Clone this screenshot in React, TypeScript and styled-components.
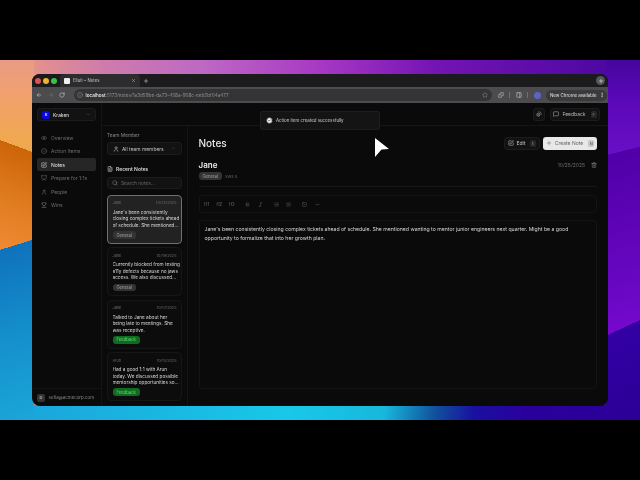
import { type FC, type ReactNode } from 'react'
import styled, { createGlobalStyle } from 'styled-components'
import {
  ArrowLeft,
  ArrowRight,
  Bold,
  CircleCheck,
  ChevronDown,
  EllipsisVertical,
  Eye,
  FileText,
  Info,
  Italic,
  List,
  ListOrdered,
  MessageSquare,
  Minus,
  PanelRight,
  Plus,
  Presentation,
  Puzzle,
  RotateCw,
  Search,
  SquareCheck,
  SquarePen,
  Star,
  SunMoon,
  Trash2,
  Trophy,
  User,
  X,
} from 'lucide-react'

const GlobalStyle = createGlobalStyle`
  html, body {
    margin: 0;
    padding: 0;
    background: #000;
    font-family: Inter, "Liberation Sans", sans-serif;
  }
  * { box-sizing: border-box; }
`

const Stage = styled.div`
  width: 640px;
  height: 480px;
  padding: 60px 0;
  background: #000;
  overflow: hidden;
  filter: blur(0.4px);
`

const Wallpaper = styled.div`
  height: 360px;
  padding: 14px 32px;
  background:
    linear-gradient(163deg, transparent 181.5px, #0f72bc 181.5px, #1590cc 270px, #1ba6d8 354px) left / 34px 100% no-repeat,
    linear-gradient(200.5deg, transparent 86.8px, #cc6408 86.8px, #e07c20 140px, #f08a34 190px) left / 34px 100% no-repeat,
    linear-gradient(180deg, #e89c84 0, #f0a070 30px, #f0a850 80px, #f0a850 100px) left / 34px 100% no-repeat,
    linear-gradient(155deg, transparent 250px, #3400a4 250px, #2a0096 340px) right / 34px 100% no-repeat,
    linear-gradient(166deg, transparent 92.4px, #5000a8 92.4px, #6c08c6 240px, #7408cc 260px) right / 34px 100% no-repeat,
    linear-gradient(180deg, #46069e 0, #5a08b8 40px, #6a10c8 100px) right / 34px 100% no-repeat,
    linear-gradient(98deg, #1ba2da 0, #18c8e8 45%, #17b8dc 60%, #10509c 68%, #1a10a0 74%, #2a009c 82%, #2c0098 100%) bottom / 100% 15px no-repeat,
    linear-gradient(90deg, #eea27c 0, #e2908e 6%, #cf7cac 16%, #bd68c4 32%, #a838c4 50%, #7414b4 68%, #46069e 100%);
`

const BrowserWindow = styled.div`
  position: relative;
  height: 332px;
  display: flex;
  flex-direction: column;
  border-radius: 8px;
  overflow: hidden;
  background: #0a0a0a;
  color: #e8e8e8;
`

const TabStrip = styled.div`
  height: 13px;
  display: flex;
  align-items: center;
  background: #1b1b1d;
  padding: 0 3px 0 3px;
`

const Light = styled.span<{ $color: string }>`
  width: 6px;
  height: 6px;
  border-radius: 50%;
  margin-right: 2px;
  background: ${(p) => p.$color};
`

const Tab = styled.div`
  width: 80px;
  height: 13px;
  margin-left: 1px;
  padding: 0 4px;
  display: flex;
  align-items: center;
  gap: 3px;
  background: #2c2c2e;
  border-radius: 4px 4px 0 0;
  font-size: 4.3px;
  color: #c8c8c8;
`

const Favicon = styled.span`
  width: 6px;
  height: 6px;
  border-radius: 1px;
  background: #eee;
`

const TabTitle = styled.span`
  flex: 1;
`

const StripButton = styled.span`
  margin-left: 3px;
  display: flex;
  color: #d8d8d8;
`

const StripEnd = styled.span`
  margin-left: auto;
  width: 9px;
  height: 9px;
  border-radius: 50%;
  display: flex;
  align-items: center;
  justify-content: center;
  background: #55555a;
  color: #fff;
`

const Toolbar = styled.div`
  height: 16px;
  display: flex;
  align-items: center;
  gap: 5.5px;
  padding: 0 1px 0 4px;
  background: #4c4c4e;
  color: #d8d8d8;
`

const UrlPill = styled.div`
  flex: 1;
  height: 12px;
  margin-left: 3px;
  padding: 0 4px 0 3px;
  display: flex;
  align-items: center;
  gap: 3px;
  border-radius: 6px;
  background: #343436;
  font-size: 4.65px;
  color: #8f8f8f;
`

const UrlHost = styled.span`
  color: #efefef;
  font-weight: 500;
`

const UrlText = styled.span`
  flex: 1;
  white-space: nowrap;
`

const ToolDivider = styled.span`
  width: 1px;
  height: 6px;
  background: #707070;
`

const ProfileDot = styled.span`
  width: 7px;
  height: 7px;
  border-radius: 50%;
  background: #5a64c8;
`

const UpdatePill = styled.div`
  width: 61px;
  height: 11px;
  padding: 0 2px 0 4px;
  display: flex;
  align-items: center;
  justify-content: space-between;
  border-radius: 6px;
  background: #3a3a3c;
  font-size: 4.4px;
  color: #e2e2e2;
  white-space: nowrap;
`

const AppBody = styled.div`
  flex: 1;
  min-height: 0;
  display: flex;
`

const Sidebar = styled.aside`
  width: 70px;
  display: flex;
  flex-direction: column;
  padding: 5px 5px 0;
  border-right: 1px solid #141414;
`

const OutlineBox = styled.div`
  display: flex;
  align-items: center;
  border: 1px solid #1c1c1c;
  background: #121212;
  border-radius: 3px;
`

const WorkspaceSelect = styled(OutlineBox)`
  height: 13px;
  padding: 0 4px;
  gap: 3px;
  font-size: 4.8px;
  font-weight: 500;
  color: #d8d8d8;
  svg { margin-left: auto; color: #666; }
`

const WorkspaceMark = styled.span`
  width: 8px;
  height: 8px;
  border-radius: 2px;
  background: #0808e0;
  color: #fff;
  font-size: 4px;
  display: flex;
  align-items: center;
  justify-content: center;
`

const NavList = styled.nav`
  margin-top: 10px;
  display: flex;
  flex-direction: column;
  gap: 0.5px;
`

const NavItem = styled.div<{ $active?: boolean }>`
  height: 13px;
  padding: 0 4px;
  display: flex;
  align-items: center;
  gap: 4px;
  border-radius: 2px;
  font-size: 5px;
  color: ${(p) => (p.$active ? '#e6e6e6' : '#6e6e6e')};
  background: ${(p) => (p.$active ? '#262626' : 'transparent')};
`

const SidebarFooter = styled.div`
  margin: auto -5px 0;
  height: 18px;
  padding: 0 5px;
  display: flex;
  align-items: center;
  gap: 3.5px;
  border-top: 1px solid #141414;
  font-size: 4.4px;
  color: #8c8c8c;
`

const FooterAvatar = styled.span`
  width: 8px;
  height: 8px;
  border-radius: 2px;
  background: #333;
  color: #ddd;
  font-size: 4px;
  display: flex;
  align-items: center;
  justify-content: center;
`

const Content = styled.div`
  flex: 1;
  min-width: 0;
  display: flex;
  flex-direction: column;
`

const TopBar = styled.header`
  height: 23px;
  flex: none;
  padding: 0 8px 0 0;
  display: flex;
  align-items: center;
  justify-content: flex-end;
  gap: 5px;
  border-bottom: 1px solid #161616;
`

const IconButton = styled(OutlineBox)`
  width: 12px;
  height: 13px;
  justify-content: center;
  color: #cfcfcf;
`

const FeedbackButton = styled(OutlineBox)`
  width: 50px;
  height: 13px;
  justify-content: center;
  gap: 3px;
  font-size: 5px;
  color: #b8b8b8;
`

const Kbd = styled.span<{ $light?: boolean }>`
  min-width: 6px;
  height: 7px;
  padding: 0 1px;
  margin-left: 2px;
  border-radius: 1.5px;
  font-size: 4px;
  display: flex;
  align-items: center;
  justify-content: center;
  background: ${(p) => (p.$light ? '#c8c8c8' : '#262626')};
  color: ${(p) => (p.$light ? '#444' : '#888')};
`

const Columns = styled.div`
  flex: 1;
  min-height: 0;
  display: flex;
`

const NotesColumn = styled.section`
  width: 86px;
  flex: none;
  padding: 6px 5px 0;
  display: flex;
  flex-direction: column;
  border-right: 1px solid #141414;
`

const FieldLabel = styled.div`
  height: 7px;
  margin-bottom: 3px;
  font-size: 4.8px;
  line-height: 7px;
  color: #8a8a8a;
`

const MemberSelect = styled(OutlineBox)`
  height: 13px;
  padding: 0 5px;
  gap: 3px;
  font-size: 4.9px;
  color: #c4c4c4;
  svg:last-child { margin-left: auto; color: #555; }
`

const RecentTitle = styled.div`
  margin-top: 10px;
  height: 7px;
  display: flex;
  align-items: center;
  gap: 3px;
  font-size: 5px;
  font-weight: 600;
  color: #d6d6d6;
`

const SearchBox = styled(OutlineBox)`
  margin-top: 5px;
  height: 12px;
  padding: 0 4px;
  gap: 3px;
  font-size: 4.8px;
  color: #666;
  svg { color: #888; }
`

const CardList = styled.div`
  margin-top: 6px;
  display: flex;
  flex-direction: column;
  gap: 3.4px;
`

const NoteCard = styled.article<{ $selected?: boolean }>`
  height: 49px;
  padding: 4px 4.5px;
  display: flex;
  flex-direction: column;
  align-items: flex-start;
  border-radius: 4px;
  border: 1px solid ${(p) => (p.$selected ? '#707070' : '#161616')};
  background: ${(p) => (p.$selected ? '#222222' : '#0c0c0c')};
`

const CardMeta = styled.div`
  width: 100%;
  height: 6px;
  display: flex;
  justify-content: space-between;
  align-items: center;
  font-size: 3.8px;
  color: #6a6a6a;
`

const CardText = styled.p`
  margin: 3px 0 3px;
  height: 20px;
  font-size: 4.7px;
  line-height: 6.6px;
  color: #dadada;
  white-space: pre;
  overflow: hidden;
`

const Tag = styled.span<{ $tone?: 'green' }>`
  display: inline-flex;
  align-items: center;
  height: 8px;
  padding: 0 4px;
  border-radius: 3px;
  font-size: 4.2px;
  color: ${(p) => (p.$tone === 'green' ? '#62d86a' : '#a6a6a6')};
  background: ${(p) => (p.$tone === 'green' ? '#0f6b22' : '#333333')};
`

const Detail = styled.section`
  flex: 1;
  min-width: 0;
  padding: 10px 11px 17px 10.5px;
  display: flex;
  flex-direction: column;
`

const TitleRow = styled.div`
  height: 14px;
  display: flex;
  align-items: center;
  gap: 3px;
`

const PageTitle = styled.h1`
  margin: 0 auto 0 0;
  font-size: 10px;
  font-weight: 500;
  color: #e6e6e6;
`

const EditButton = styled(OutlineBox)`
  width: 36px;
  height: 13px;
  justify-content: center;
  gap: 2.5px;
  font-size: 5px;
  color: #c8c8c8;
`

const CreateButton = styled.div`
  width: 54px;
  height: 13px;
  display: flex;
  align-items: center;
  justify-content: center;
  gap: 3px;
  border-radius: 3px;
  background: #e8e8e8;
  font-size: 5px;
  color: #666;
`

const NoteHeader = styled.div`
  margin-top: 9px;
  height: 12px;
  display: flex;
  align-items: center;
  justify-content: space-between;
`

const NoteName = styled.h2`
  margin: 0;
  font-size: 8px;
  font-weight: 600;
  color: #eee;
`

const NoteDate = styled.div`
  display: flex;
  align-items: center;
  gap: 6px;
  font-size: 5px;
  color: #6e6e6e;
  svg { color: #8a8a8a; }
`

const NoteTags = styled.div`
  margin-top: 1px;
  padding-bottom: 6px;
  display: flex;
  align-items: center;
  gap: 3px;
  font-size: 4px;
  color: #666;
  border-bottom: 1px solid #161616;
`

const EditorToolbar = styled.div`
  margin-top: 8px;
  height: 18px;
  padding: 0 1px;
  display: flex;
  align-items: center;
  gap: 3.5px;
  border: 1px solid #141414;
  border-radius: 3px;
  font-size: 4.2px;
  color: #6c6c6c;
`

const ToolGroup = styled.div`
  display: flex;
  align-items: center;
`

const ToolItem = styled.span`
  width: 12.5px;
  display: flex;
  justify-content: center;
`

const EditorBody = styled.div`
  margin-top: 7px;
  flex: 1;
  padding: 4px 5px;
  border: 1px solid #141414;
  border-radius: 3px;
  font-size: 5.15px;
  line-height: 9px;
  color: #d8d8d8;
`

const Toast = styled.div`
  position: absolute;
  left: 228px;
  top: 37px;
  width: 120px;
  height: 19px;
  padding: 0 5px;
  display: flex;
  align-items: center;
  gap: 3px;
  border: 1px solid #1e1e1e;
  border-radius: 2px;
  background: #141414;
  font-size: 4.4px;
  color: #cfcfcf;
  svg { fill: #f0f0f0; color: #141414; }
`

const CursorArrow = styled.svg`
  position: absolute;
  left: 342px;
  top: 63px;
`

const navItems: { label: string; icon: ReactNode; active?: boolean }[] = [
  { label: 'Overview', icon: <Eye size={6} /> },
  { label: 'Action Items', icon: <CircleCheck size={6} /> },
  { label: 'Notes', icon: <SquarePen size={6} />, active: true },
  { label: 'Prepare for 1:1s', icon: <Presentation size={6} /> },
  { label: 'People', icon: <User size={6} /> },
  { label: 'Wins', icon: <Trophy size={6} /> },
]

const notes = [
  {
    author: 'Jane',
    date: '10/25/2025',
    text: "Jane's been consistently\nclosing complex tickets ahead\nof schedule. She mentioned...",
    tag: 'General',
    selected: true,
  },
  {
    author: 'Jane',
    date: '10/19/2025',
    text: 'Currently blocked from testing\na11y defects because no jaws\naccess. We also discussed...',
    tag: 'General',
  },
  {
    author: 'Jane',
    date: '10/17/2025',
    text: 'Talked to Jane about her\nbeing late to meetings. She\nwas receptive.',
    tag: 'Feedback',
  },
  {
    author: 'Arun',
    date: '10/15/2025',
    text: 'Had a good 1:1 with Arun\ntoday. We discussed possible\nmentorship opportunities so...',
    tag: 'Feedback',
  },
]

const toolGroups: ReactNode[][] = [
  ['H1', 'H2', 'H3'],
  [<Bold size={5} />, <Italic size={5} />],
  [<List size={5} />, <ListOrdered size={5} />],
  [<SquareCheck size={5} />, <Minus size={5} />],
]

const Keycap: FC<{ children: ReactNode; light?: boolean }> = ({ children, light }) => (
  <Kbd $light={light}>{children}</Kbd>
)

export default function App() {
  return (
    <>
      <GlobalStyle />
      <Stage>
        <Wallpaper>
          <BrowserWindow>
            <TabStrip>
              <Light $color="#e0504c" />
              <Light $color="#e8b52c" />
              <Light $color="#3cc04a" />
              <Tab>
                <Favicon />
                <TabTitle>Elluti • Notes</TabTitle>
                <X size={5} />
              </Tab>
              <StripButton>
                <Plus size={6} />
              </StripButton>
              <StripEnd>
                <Plus size={6} />
              </StripEnd>
            </TabStrip>
            <Toolbar>
              <ArrowLeft size={6} />
              <ArrowRight size={6} color="#777" />
              <RotateCw size={6} />
              <UrlPill>
                <Info size={6} />
                <UrlText>
                  <UrlHost>localhost</UrlHost>:5173/notes/1a3d59be-da73-458a-908c-eeb2bf04a477
                </UrlText>
                <Star size={6} />
              </UrlPill>
              <Puzzle size={6} />
              <ToolDivider />
              <PanelRight size={6} />
              <ToolDivider />
              <ProfileDot />
              <UpdatePill>
                New Chrome available
                <EllipsisVertical size={6} />
              </UpdatePill>
            </Toolbar>
            <AppBody>
              <Sidebar>
                <WorkspaceSelect>
                  <WorkspaceMark>K</WorkspaceMark>
                  Kraken
                  <ChevronDown size={5} />
                </WorkspaceSelect>
                <NavList>
                  {navItems.map((item) => (
                    <NavItem key={item.label} $active={item.active}>
                      {item.icon}
                      {item.label}
                    </NavItem>
                  ))}
                </NavList>
                <SidebarFooter>
                  <FooterAvatar>D</FooterAvatar>
                  sofia@acmecorp.com
                </SidebarFooter>
              </Sidebar>
              <Content>
                <TopBar>
                  <IconButton>
                    <SunMoon size={6} />
                  </IconButton>
                  <FeedbackButton>
                    <MessageSquare size={6} />
                    Feedback
                    <Keycap>F</Keycap>
                  </FeedbackButton>
                </TopBar>
                <Columns>
                  <NotesColumn>
                    <FieldLabel>Team Member</FieldLabel>
                    <MemberSelect>
                      <User size={6} />
                      All team members
                      <ChevronDown size={5} />
                    </MemberSelect>
                    <RecentTitle>
                      <FileText size={6} />
                      Recent Notes
                    </RecentTitle>
                    <SearchBox>
                      <Search size={6} />
                      Search notes...
                    </SearchBox>
                    <CardList>
                      {notes.map((note) => (
                        <NoteCard key={note.date} $selected={note.selected}>
                          <CardMeta>
                            <span>{note.author}</span>
                            <span>{note.date}</span>
                          </CardMeta>
                          <CardText>{note.text}</CardText>
                          <Tag $tone={note.tag === 'Feedback' ? 'green' : undefined}>{note.tag}</Tag>
                        </NoteCard>
                      ))}
                    </CardList>
                  </NotesColumn>
                  <Detail>
                    <TitleRow>
                      <PageTitle>Notes</PageTitle>
                      <EditButton>
                        <SquarePen size={6} />
                        Edit
                        <Keycap>E</Keycap>
                      </EditButton>
                      <CreateButton>
                        <Plus size={6} />
                        Create Note
                        <Keycap light>N</Keycap>
                      </CreateButton>
                    </TitleRow>
                    <NoteHeader>
                      <NoteName>Jane</NoteName>
                      <NoteDate>
                        10/25/2025
                        <Trash2 size={6} />
                      </NoteDate>
                    </NoteHeader>
                    <NoteTags>
                      <Tag>General</Tag>
                      SWE II
                    </NoteTags>
                    <EditorToolbar>
                      {toolGroups.map((group, g) => (
                        <ToolGroup key={g}>
                          {group.map((tool, i) => (
                            <ToolItem key={i}>{tool}</ToolItem>
                          ))}
                        </ToolGroup>
                      ))}
                    </EditorToolbar>
                    <EditorBody>
                      Jane's been consistently closing complex tickets ahead of schedule. She mentioned wanting to mentor
                      junior engineers next quarter. Might be a good opportunity to formalize that into her growth plan.
                    </EditorBody>
                  </Detail>
                </Columns>
              </Content>
            </AppBody>
            <Toast>
              <CircleCheck size={7} />
              Action item created successfully
            </Toast>
            <CursorArrow width="16" height="20" viewBox="0 0 16 20">
              <path d="M1 1 L15 12 L7.5 12.5 L1 20 Z" fill="#fff" />
            </CursorArrow>
          </BrowserWindow>
        </Wallpaper>
      </Stage>
    </>
  )
}
